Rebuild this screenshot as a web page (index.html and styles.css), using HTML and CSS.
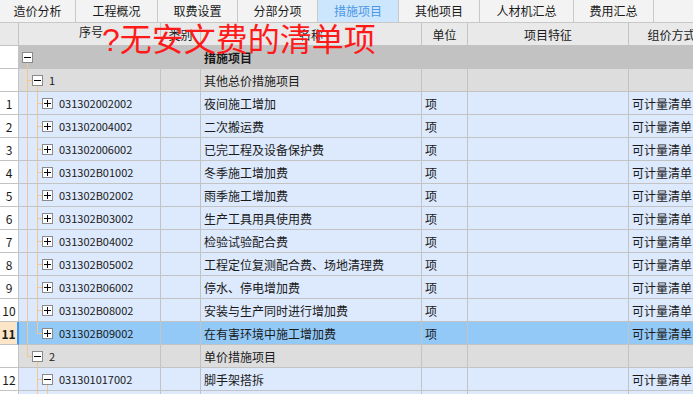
FILE: index.html
```html
<!DOCTYPE html>
<html lang="zh-CN">
<head>
  <meta charset="UTF-8">
  <title>措施项目</title>
  <link rel="stylesheet" href="styles.css">
</head>
<body>
  <div class="page">

    <div class="tabs">
      <div class="tab t1">造价分析</div>
      <div class="tab t2">工程概况</div>
      <div class="tab t3">取费设置</div>
      <div class="tab t4">分部分项</div>
      <div class="tab t5 active">措施项目</div>
      <div class="tab t6">其他项目</div>
      <div class="tab t7">人材机汇总</div>
      <div class="tab t8">费用汇总</div>
      <div class="tab-rest"></div>
    </div>

    <div class="grid">

      <div class="row head">
        <div class="c num"></div>
        <div class="c code center">序号</div>
        <div class="c center">类别</div>
        <div class="c center">名称</div>
        <div class="c center">单位</div>
        <div class="c center">项目特征</div>
        <div class="c center">组价方式</div>
      </div>

      <div class="row root">
        <div class="c num"></div>
        <div class="c code"><span class="box minus open"><i></i></span></div>
        <div class="c"></div>
        <div class="c bold">措施项目</div>
        <div class="c"></div>
        <div class="c"></div>
        <div class="c"></div>
      </div>

      <div class="row group">
        <div class="c num"></div>
        <div class="c code"><span class="ind tee"></span><span class="box minus open"><i></i></span><span class="txt">1</span></div>
        <div class="c"></div>
        <div class="c">其他总价措施项目</div>
        <div class="c"></div>
        <div class="c"></div>
        <div class="c"></div>
      </div>

      <div class="row item">
        <div class="c num">1</div>
        <div class="c code"><span class="ind pipe"></span><span class="ind tee"></span><span class="box plus"><i></i></span><span class="txt">031302002002</span></div>
        <div class="c"></div>
        <div class="c">夜间施工增加</div>
        <div class="c">项</div>
        <div class="c"></div>
        <div class="c">可计量清单</div>
      </div>

      <div class="row item">
        <div class="c num">2</div>
        <div class="c code"><span class="ind pipe"></span><span class="ind tee"></span><span class="box plus"><i></i></span><span class="txt">031302004002</span></div>
        <div class="c"></div>
        <div class="c">二次搬运费</div>
        <div class="c">项</div>
        <div class="c"></div>
        <div class="c">可计量清单</div>
      </div>

      <div class="row item">
        <div class="c num">3</div>
        <div class="c code"><span class="ind pipe"></span><span class="ind tee"></span><span class="box plus"><i></i></span><span class="txt">031302006002</span></div>
        <div class="c"></div>
        <div class="c">已完工程及设备保护费</div>
        <div class="c">项</div>
        <div class="c"></div>
        <div class="c">可计量清单</div>
      </div>

      <div class="row item">
        <div class="c num">4</div>
        <div class="c code"><span class="ind pipe"></span><span class="ind tee"></span><span class="box plus"><i></i></span><span class="txt">031302B01002</span></div>
        <div class="c"></div>
        <div class="c">冬季施工增加费</div>
        <div class="c">项</div>
        <div class="c"></div>
        <div class="c">可计量清单</div>
      </div>

      <div class="row item">
        <div class="c num">5</div>
        <div class="c code"><span class="ind pipe"></span><span class="ind tee"></span><span class="box plus"><i></i></span><span class="txt">031302B02002</span></div>
        <div class="c"></div>
        <div class="c">雨季施工增加费</div>
        <div class="c">项</div>
        <div class="c"></div>
        <div class="c">可计量清单</div>
      </div>

      <div class="row item">
        <div class="c num">6</div>
        <div class="c code"><span class="ind pipe"></span><span class="ind tee"></span><span class="box plus"><i></i></span><span class="txt">031302B03002</span></div>
        <div class="c"></div>
        <div class="c">生产工具用具使用费</div>
        <div class="c">项</div>
        <div class="c"></div>
        <div class="c">可计量清单</div>
      </div>

      <div class="row item">
        <div class="c num">7</div>
        <div class="c code"><span class="ind pipe"></span><span class="ind tee"></span><span class="box plus"><i></i></span><span class="txt">031302B04002</span></div>
        <div class="c"></div>
        <div class="c">检验试验配合费</div>
        <div class="c">项</div>
        <div class="c"></div>
        <div class="c">可计量清单</div>
      </div>

      <div class="row item">
        <div class="c num">8</div>
        <div class="c code"><span class="ind pipe"></span><span class="ind tee"></span><span class="box plus"><i></i></span><span class="txt">031302B05002</span></div>
        <div class="c"></div>
        <div class="c">工程定位复测配合费、场地清理费</div>
        <div class="c">项</div>
        <div class="c"></div>
        <div class="c">可计量清单</div>
      </div>

      <div class="row item">
        <div class="c num">9</div>
        <div class="c code"><span class="ind pipe"></span><span class="ind tee"></span><span class="box plus"><i></i></span><span class="txt">031302B06002</span></div>
        <div class="c"></div>
        <div class="c">停水、停电增加费</div>
        <div class="c">项</div>
        <div class="c"></div>
        <div class="c">可计量清单</div>
      </div>

      <div class="row item">
        <div class="c num">10</div>
        <div class="c code"><span class="ind pipe"></span><span class="ind tee"></span><span class="box plus"><i></i></span><span class="txt">031302B08002</span></div>
        <div class="c"></div>
        <div class="c">安装与生产同时进行增加费</div>
        <div class="c">项</div>
        <div class="c"></div>
        <div class="c">可计量清单</div>
      </div>

      <div class="row item selected">
        <div class="c num">11</div>
        <div class="c code"><span class="ind pipe"></span><span class="ind elbow"></span><span class="box plus"><i></i></span><span class="txt">031302B09002</span></div>
        <div class="c"></div>
        <div class="c">在有害环境中施工增加费</div>
        <div class="c">项</div>
        <div class="c"></div>
        <div class="c">可计量清单</div>
      </div>

      <div class="row group">
        <div class="c num"></div>
        <div class="c code"><span class="ind elbow"></span><span class="box minus open"><i></i></span><span class="txt">2</span></div>
        <div class="c"></div>
        <div class="c">单价措施项目</div>
        <div class="c"></div>
        <div class="c"></div>
        <div class="c"></div>
      </div>

      <div class="row item">
        <div class="c num">12</div>
        <div class="c code"><span class="ind"></span><span class="ind tee"></span><span class="box minus open"><i></i></span><span class="txt">031301017002</span></div>
        <div class="c"></div>
        <div class="c">脚手架搭拆</div>
        <div class="c"></div>
        <div class="c"></div>
        <div class="c">可计量清单</div>
      </div>

      <div class="row item">
        <div class="c num"></div>
        <div class="c code"><span class="ind"></span><span class="ind pipe"></span><span class="ind tee"></span></div>
        <div class="c"></div>
        <div class="c"></div>
        <div class="c"></div>
        <div class="c"></div>
        <div class="c"></div>
      </div>

    </div>

    <div class="note">?无安文费的清单项</div>

  </div>
</body>
</html>
```

FILE: styles.css
```css
html, body {
  margin: 0;
  padding: 0;
}

body {
  width: 693px;
  height: 394px;
  overflow: hidden;
  background: #ffffff;
  font-family: "Noto Sans CJK SC", "Liberation Sans", sans-serif;
  font-size: 12px;
  color: #1a1a1a;
}

.page {
  position: relative;
  width: 693px;
  height: 394px;
  overflow: hidden;
}

/* tab strip */
.tabs {
  display: flex;
  height: 23px;
  background: #f3f3f3;
  border-bottom: 1px solid #c8c8c8;
  box-sizing: border-box;
}

.tab {
  display: flex;
  align-items: center;
  justify-content: center;
  border-right: 1px solid #c8c8c8;
  color: #1a1a1a;
  line-height: 1;
}

.t1 { width: 75px; }
.t2 { width: 81px; }
.t3 { width: 79px; }
.t4 { width: 79px; }
.t5 { width: 80px; }
.t6 { width: 80px; }
.t7 { width: 93px; }
.t8 { width: 79px; }

.tab.active {
  background: #cce6fd;
  color: #4b97e6;
}

.tab-rest {
  flex: 1;
}

/* grid */
.row {
  display: grid;
  grid-template-columns: 19px 142px 40px 221px 46px 161px 86px;
  height: 23px;
  width: 715px;
}

.c {
  box-sizing: border-box;
  height: 23px;
  border-right: 1px solid #c3c3c3;
  border-bottom: 1px solid #c3c3c3;
  display: flex;
  align-items: center;
  padding-left: 3px;
  white-space: nowrap;
  overflow: hidden;
}

.center {
  justify-content: center;
  padding-left: 0;
}

.bold {
  font-weight: bold;
}

.num {
  justify-content: center;
  padding-left: 0;
  background: #ffffff;
}

.head .c {
  background: #e9e9e9;
}

.root .c {
  background: #c2c2c2;
}

.group .c {
  background: #dddddd;
}

.item .c {
  background: #dde9fc;
}

.row .c.num {
  background: #ffffff;
}

.head .c.num {
  background: #e9e9e9;
}

.selected .c {
  background: #93c9f7;
}

.selected .c.num {
  background: #fde5c7;
  font-weight: bold;
  border-right: 2px solid #3d9af4;
}

/* tree column */
.code {
  padding-left: 3px;
  align-items: stretch;
  overflow: hidden;
}

.ind {
  flex: none;
  width: 10px;
}

.pipe {
  background: linear-gradient(#f6c690, #f6c690) 5px 0 / 1px 100% no-repeat;
}

.tee {
  background:
    linear-gradient(#f6c690, #f6c690) 5px 0 / 1px 100% no-repeat,
    linear-gradient(#f6c690, #f6c690) 5px 11px / 5px 1px no-repeat;
}

.elbow {
  background:
    linear-gradient(#f6c690, #f6c690) 5px 0 / 1px 12px no-repeat,
    linear-gradient(#f6c690, #f6c690) 5px 11px / 5px 1px no-repeat;
}

.box {
  flex: none;
  width: 11px;
  display: flex;
  align-items: center;
}

.box.open {
  background: linear-gradient(#f6c690, #f6c690) 5px 14px / 1px 100% no-repeat;
}

.box i {
  display: block;
  position: relative;
  width: 11px;
  height: 11px;
  box-sizing: border-box;
  border: 1px solid #8a8a8a;
  background: #ffffff;
}

.box i::before {
  content: "";
  position: absolute;
  left: 1px;
  top: 4px;
  width: 7px;
  height: 1px;
  background: #000000;
}

.plus i::after {
  content: "";
  position: absolute;
  left: 4px;
  top: 1px;
  width: 1px;
  height: 7px;
  background: #000000;
}

.txt {
  display: flex;
  align-items: center;
  padding-left: 6px;
  font-size: 11px;
}

/* red annotation */
.note {
  position: absolute;
  left: 102px;
  top: 24px;
  font-size: 32px;
  line-height: 1;
  color: #ff1a1a;
  font-family: "Liberation Sans", "Noto Sans CJK SC", sans-serif;
  white-space: nowrap;
}
```
